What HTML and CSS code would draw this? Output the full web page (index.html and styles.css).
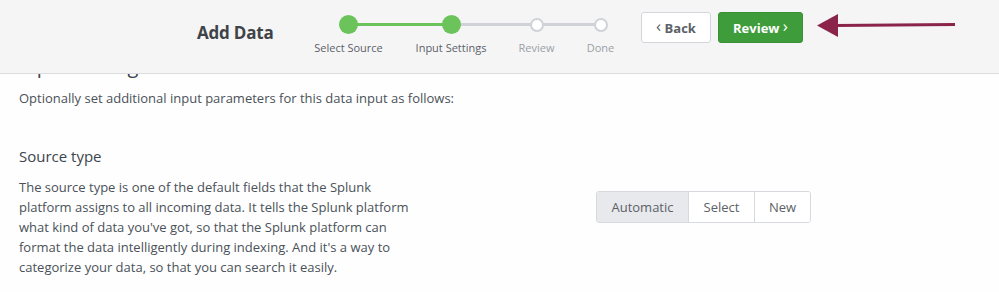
FILE: index.html
```html
<!DOCTYPE html>
<html>
<head>
<meta charset="utf-8">
<link rel="stylesheet" href="styles.css">
</head>
<body>
<header class="topbar">
  <div class="title">Add Data</div>
  <div class="steps">
    <div class="step step-1 done">
      <div class="track"><span class="dot"></span></div>
      <div class="label">Select Source</div>
    </div>
    <div class="step step-2 done">
      <div class="track"><span class="dot"></span></div>
      <div class="label">Input Settings</div>
    </div>
    <div class="step step-3">
      <div class="track"><span class="dot"></span></div>
      <div class="label">Review</div>
    </div>
    <div class="step step-4">
      <div class="track"><span class="dot"></span></div>
      <div class="label">Done</div>
    </div>
  </div>
  <button class="btn btn-back"><span class="chev">&lsaquo;</span> Back</button>
  <button class="btn btn-next">Review <span class="chev">&rsaquo;</span></button>
  <svg class="pointer" width="140" height="26" viewBox="0 0 140 26">
    <line x1="18" y1="12.5" x2="138" y2="11.5" stroke="#8a2449" stroke-width="3"/>
    <polygon points="0,12.5 21,1 21,24" fill="#8a2449"/>
  </svg>
</header>
<main class="content">
  <h2 class="page-heading">Input Settings</h2>
  <p class="intro">Optionally set additional input parameters for this data input as follows:</p>
  <section class="field">
    <h3 class="field-title">Source type</h3>
    <div class="field-row">
      <p class="field-desc">The source type is one of the default fields that the Splunk platform assigns to all incoming data. It tells the Splunk platform what kind of data you've got, so that the Splunk platform can format the data intelligently during indexing. And it's a way to categorize your data, so that you can search it easily.</p>
      <div class="segmented">
        <button class="seg active">Automatic</button>
        <button class="seg">Select</button>
        <button class="seg">New</button>
      </div>
    </div>
  </section>
</main>
</body>
</html>
```
FILE: styles.css
```css
* { box-sizing: border-box; }
html, body { margin: 0; padding: 0; }
body {
  width: 999px;
  height: 292px;
  overflow: hidden;
  background: #fefefe;
  font-family: "Open Sans", "Liberation Sans", sans-serif;
  color: #3c444d;
}
.topbar {
  position: relative;
  z-index: 2;
  height: 74px;
  background: #f5f5f6;
  border-bottom: 1px solid #dcdde0;
  display: flex;
  align-items: flex-start;
  padding-left: 197px;
}
.title {
  width: 100px;
  margin-top: 21px;
  font-size: 17px;
  font-weight: 700;
  color: #3f4348;
  letter-spacing: -0.2px;
}
.steps {
  display: flex;
  margin-top: 15px;
}
.step {
  display: flex;
  flex-direction: column;
  align-items: center;
}
.step-1 { width: 103px; }
.step-2 { width: 102px; }
.step-3 { width: 69px; }
.step-4 { width: 59px; }
.track {
  position: relative;
  width: 100%;
  height: 19px;
  display: flex;
  justify-content: center;
  align-items: center;
}
.track::before, .track::after {
  content: "";
  position: absolute;
  top: 8px;
  height: 3px;
  width: 50%;
  background: #cfd2d6;
}
.track::before { left: 0; }
.track::after { right: 0; }
.step-1 .track::before, .step-4 .track::after { display: none; }
.step-1 .track::after, .step-2 .track::before { background: #6cc35c; }
.dot {
  position: relative;
  z-index: 1;
  width: 14px;
  height: 14px;
  border-radius: 50%;
  background: #fff;
  border: 2px solid #cfd2d6;
}
.done .dot {
  width: 19px;
  height: 19px;
  background: #6cc35c;
  border: none;
}
.label {
  margin-top: 6px;
  font-size: 11px;
  color: #9a9fa5;
  white-space: nowrap;
}
.done .label { color: #5c6168; }
.btn {
  margin-top: 12px;
  height: 31px;
  border-radius: 3px;
  font-family: inherit;
  font-size: 13px;
  font-weight: 700;
  padding: 0;
  cursor: pointer;
}
.chev { font-size: 17px; font-weight: 400; line-height: 1; position: relative; top: -1px; }
.btn-back {
  margin-left: 11px;
  width: 70px;
  background: #fff;
  border: 1px solid #d3d6da;
  color: #5c6168;
}
.btn-next {
  margin-left: 7px;
  width: 85px;
  background: #3f9c3a;
  border: 1px solid #3a9035;
  color: #fff;
}
.pointer {
  margin-left: 14px;
  margin-top: 13px;
}
.content {
  padding-left: 19px;
}
.page-heading {
  margin: -21px 0 0 0;
  font-size: 20px;
  font-weight: 400;
  line-height: 26px;
  color: #3c444d;
}
.intro {
  margin: 9px 0 0 0;
  font-size: 13px;
  line-height: 20px;
  color: #4a5159;
}
.field-title {
  margin: 38px 0 0 0;
  font-size: 15px;
  font-weight: 400;
  line-height: 20px;
  color: #3c444d;
}
.field-row {
  display: flex;
  align-items: flex-start;
  margin-top: 11px;
}
.field-desc {
  width: 402px;
  flex: none;
  margin: 0;
  font-size: 13px;
  line-height: 20px;
  color: #4a5159;
}
.segmented {
  margin-left: 175px;
  margin-top: 14px;
  display: flex;
  border: 1px solid #d6d9dd;
  border-radius: 3px;
  overflow: hidden;
}
.seg {
  height: 30px;
  border: none;
  border-left: 1px solid #d6d9dd;
  background: #fff;
  font-family: inherit;
  font-size: 13px;
  color: #5c6168;
  padding: 0;
}
.seg:first-child { border-left: none; width: 91px; background: #e7e9ec; }
.seg:nth-child(2) { width: 66px; }
.seg:nth-child(3) { width: 56px; }
```
